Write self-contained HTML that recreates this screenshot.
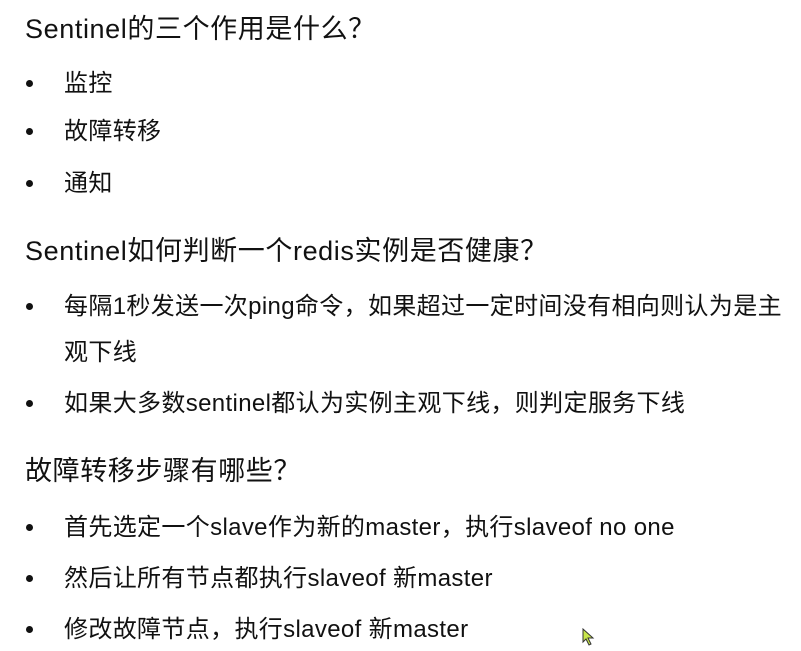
<!DOCTYPE html>
<html><head><meta charset="utf-8"><style>
body{margin:0;width:801px;height:651px;background:#fff;position:relative;overflow:hidden;font-family:"Liberation Sans","Noto Sans CJK SC",sans-serif;color:#111}
.h{position:absolute;left:25px;font-size:27px;line-height:30px;white-space:nowrap;letter-spacing:0.6px}
.t{position:absolute;left:64px;font-size:24px;line-height:28px;white-space:nowrap;letter-spacing:0.35px}
.b{position:absolute;left:26px;width:7px;height:7px;border-radius:50%;background:#111}
</style></head><body>
<div class="h" style="top:14px">Sentinel的三个作用是什么？</div>
<div class="b" style="top:80px"></div><div class="t" style="top:70px">监控</div>
<div class="b" style="top:128px"></div><div class="t" style="top:118px">故障转移</div>
<div class="b" style="top:180px"></div><div class="t" style="top:170px">通知</div>
<div class="h" style="top:236px">Sentinel如何判断一个redis实例是否健康？</div>
<div class="b" style="top:303px"></div><div class="t" style="top:293px">每隔1秒发送一次ping命令，如果超过一定时间没有相向则认为是主</div>
<div class="t" style="top:339px">观下线</div>
<div class="b" style="top:400px"></div><div class="t" style="top:390px">如果大多数sentinel都认为实例主观下线，则判定服务下线</div>
<div class="h" style="top:456px">故障转移步骤有哪些？</div>
<div class="b" style="top:524px"></div><div class="t" style="top:514px">首先选定一个slave作为新的master，执行slaveof no one</div>
<div class="b" style="top:575px"></div><div class="t" style="top:565px">然后让所有节点都执行slaveof 新master</div>
<div class="b" style="top:626px"></div><div class="t" style="top:616px">修改故障节点，执行slaveof 新master</div>
<svg style="position:absolute;left:582px;top:628px" width="14" height="18"><path d="M1 1 L1 14 L4 11 L7 17 L9 16 L6 10 L11 10 Z" fill="#c8e64a" stroke="#333" stroke-width="1"/></svg>
</body></html>
